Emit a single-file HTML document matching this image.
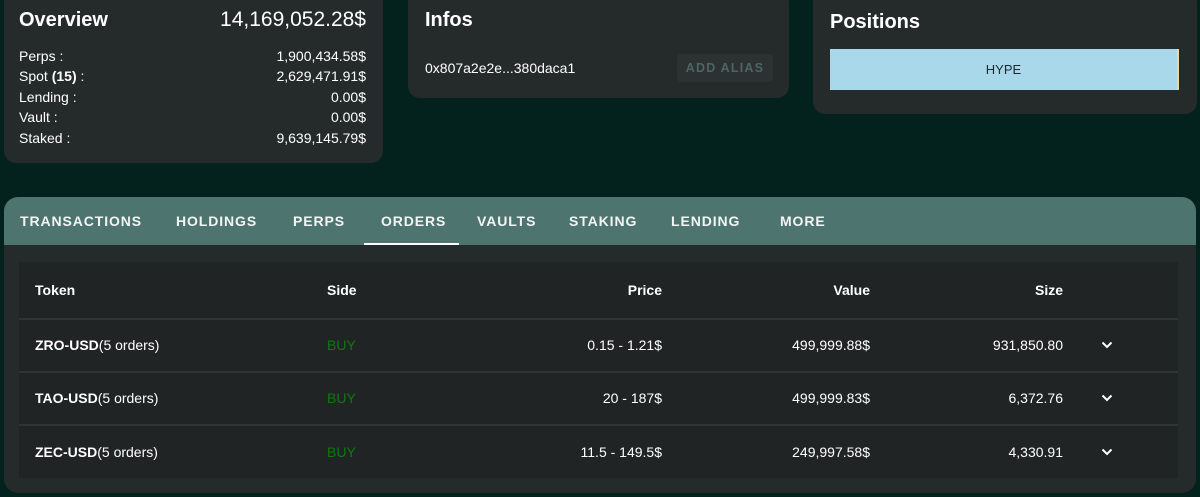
<!DOCTYPE html>
<html><head><meta charset="utf-8"><style>
*{box-sizing:border-box;margin:0;padding:0}
body{width:1200px;height:497px;background:#03211d;font-family:"Liberation Sans",sans-serif;color:#fff;position:relative;overflow:hidden}
.card{position:absolute;background:#252a2a;border-radius:12px}
.abs{position:absolute;white-space:nowrap}
.tab{position:absolute;top:213px;font-size:14px;font-weight:bold;letter-spacing:0.9px;color:#f2f5f4}
.cell{position:absolute;font-size:14px;white-space:nowrap}
.r{text-align:right}
.sep{position:absolute;left:19px;width:1159px;height:2px;background:#2f3434}
.buy{color:#0d7a0d}
</style></head><body>
<div class="card" style="left:4px;top:-10px;width:379px;height:173px"></div>
<div class="abs" style="left:19px;top:9px;font-size:20px;font-weight:bold">Overview</div>
<div class="abs" style="right:834px;top:8px;font-size:21px">14,169,052.28$</div>
<div class="abs" style="left:19px;top:46px;font-size:14px;line-height:20.4px">Perps :<br>Spot <b>(15)</b> :<br>Lending :<br>Vault :<br>Staked :</div>
<div class="abs r" style="right:834px;top:46px;font-size:14px;line-height:20.4px">1,900,434.58$<br>2,629,471.91$<br>0.00$<br>0.00$<br>9,639,145.79$</div>

<div class="card" style="left:408px;top:-10px;width:381px;height:108px"></div>
<div class="abs" style="left:425px;top:9px;font-size:20px;font-weight:bold">Infos</div>
<div class="abs" style="left:425px;top:60px;font-size:14px">0x807a2e2e...380daca1</div>
<div class="abs" style="left:677px;top:54px;width:96px;height:28px;background:#2b3231;border-radius:4px;color:#4e6562;font-size:12.5px;font-weight:bold;letter-spacing:1.2px;text-align:center;line-height:28px">ADD ALIAS</div>

<div class="card" style="left:813px;top:-10px;width:384px;height:124px"></div>
<div class="abs" style="left:830px;top:11px;font-size:20px;font-weight:bold">Positions</div>
<div class="abs" style="left:830px;top:49px;width:349px;height:41px;background:#a8d8ea;border-right:2px solid #e8d9a0;color:#1a2a30;font-size:13px;text-align:center;line-height:41px">HYPE</div>

<div class="card" style="left:4px;top:197px;width:1192px;height:296px;border-radius:14px;overflow:hidden">
<div style="height:48px;background:#4d746e"></div>
</div>
<div class="tab" style="left:20px">TRANSACTIONS</div>
<div class="tab" style="left:176px">HOLDINGS</div>
<div class="tab" style="left:293px">PERPS</div>
<div class="tab" style="left:381px">ORDERS</div>
<div class="tab" style="left:477px">VAULTS</div>
<div class="tab" style="left:569px">STAKING</div>
<div class="tab" style="left:671px">LENDING</div>
<div class="tab" style="left:780px">MORE</div>
<div class="abs" style="left:364px;top:243px;width:95px;height:2px;background:#fff"></div>

<div class="abs" style="left:19px;top:262px;width:1159px;height:216px;background:#212424"></div>
<div class="sep" style="top:318px"></div>
<div class="sep" style="top:371px"></div>
<div class="sep" style="top:424px"></div>

<div class="cell" style="left:35px;top:282px;font-weight:bold">Token</div>
<div class="cell" style="left:327px;top:282px;font-weight:bold">Side</div>
<div class="cell r" style="right:538px;top:282px;font-weight:bold">Price</div>
<div class="cell r" style="right:330px;top:282px;font-weight:bold">Value</div>
<div class="cell r" style="right:137px;top:282px;font-weight:bold">Size</div>

<div class="cell" style="left:35px;top:337px"><b>ZRO-USD</b>(5 orders)</div>
<div class="cell buy" style="left:327px;top:337px">BUY</div>
<div class="cell r" style="right:538px;top:337px">0.15 - 1.21$</div>
<div class="cell r" style="right:330px;top:337px">499,999.88$</div>
<div class="cell r" style="right:137px;top:337px">931,850.80</div>

<div class="cell" style="left:35px;top:390px"><b>TAO-USD</b>(5 orders)</div>
<div class="cell buy" style="left:327px;top:390px">BUY</div>
<div class="cell r" style="right:538px;top:390px">20 - 187$</div>
<div class="cell r" style="right:330px;top:390px">499,999.83$</div>
<div class="cell r" style="right:137px;top:390px">6,372.76</div>

<div class="cell" style="left:35px;top:444px"><b>ZEC-USD</b>(5 orders)</div>
<div class="cell buy" style="left:327px;top:444px">BUY</div>
<div class="cell r" style="right:538px;top:444px">11.5 - 149.5$</div>
<div class="cell r" style="right:330px;top:444px">249,997.58$</div>
<div class="cell r" style="right:137px;top:444px">4,330.91</div>

<svg class="abs" style="left:1101px;top:340px" width="12" height="10" viewBox="0 0 12 10"><path d="M1.5 2.5L6 7L10.5 2.5" stroke="#fff" stroke-width="2" fill="none"/></svg>
<svg class="abs" style="left:1101px;top:393px" width="12" height="10" viewBox="0 0 12 10"><path d="M1.5 2.5L6 7L10.5 2.5" stroke="#fff" stroke-width="2" fill="none"/></svg>
<svg class="abs" style="left:1101px;top:447px" width="12" height="10" viewBox="0 0 12 10"><path d="M1.5 2.5L6 7L10.5 2.5" stroke="#fff" stroke-width="2" fill="none"/></svg>
</body></html>
